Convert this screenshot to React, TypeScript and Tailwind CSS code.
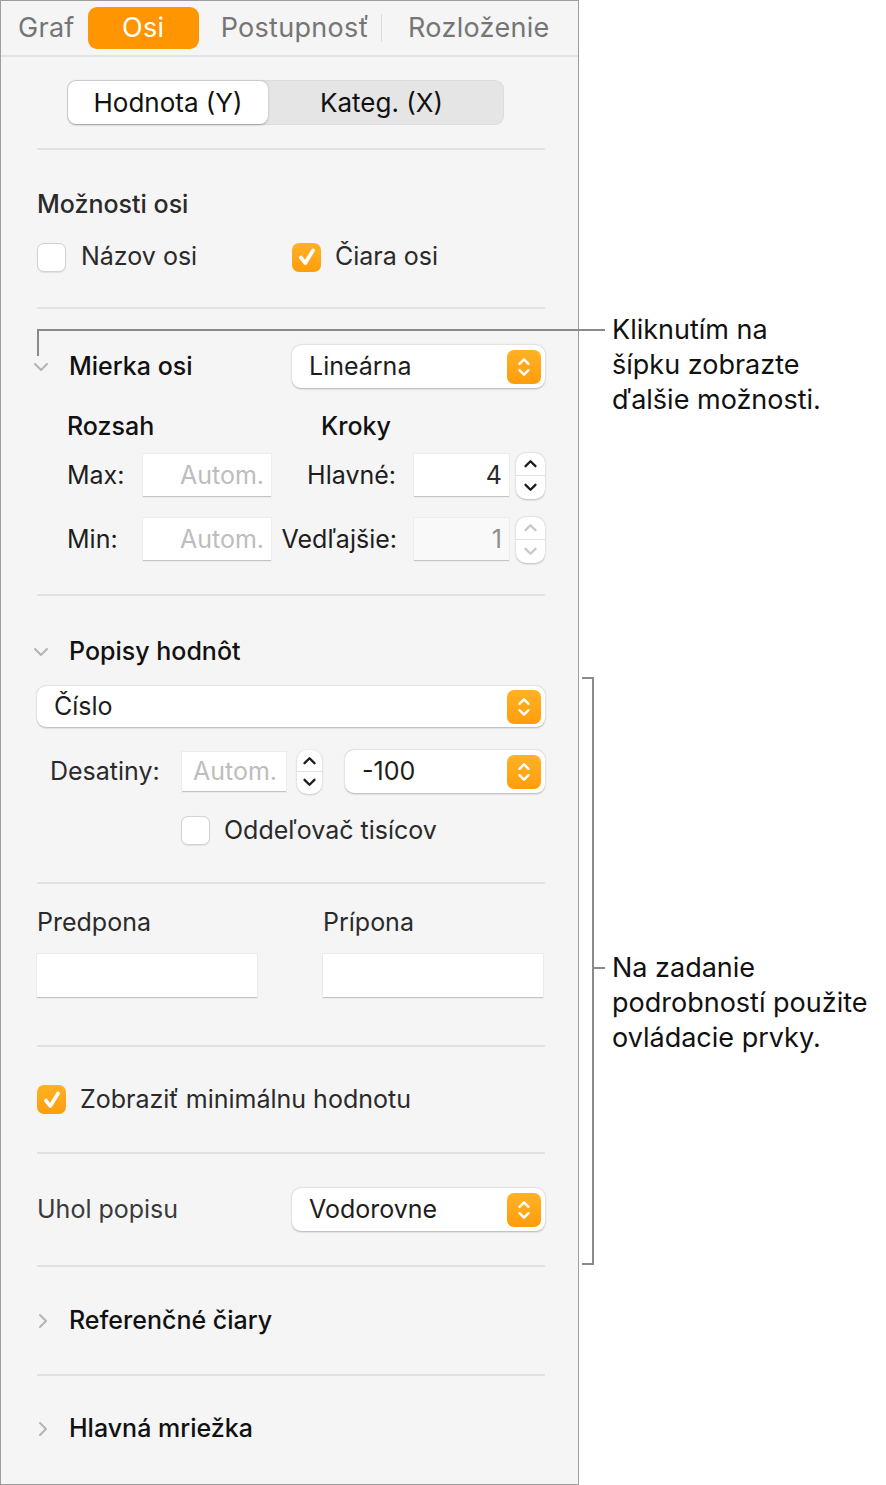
import React from 'react'

const FONT = { fontFamily: 'Inter, "Noto Sans", "Liberation Sans", sans-serif' }

function UpDown({ className = '' }: { className?: string }) {
  return (
    <svg viewBox="0 0 20 28" className={className} fill="none" stroke="currentColor" strokeWidth="2.6" strokeLinecap="round" strokeLinejoin="round">
      <path d="M5 10.5 L10 5.5 L15 10.5" />
      <path d="M5 17.5 L10 22.5 L15 17.5" />
    </svg>
  )
}

function Popup({ label, className = '' }: { label: string; className?: string }) {
  return (
    <div className={`flex items-center justify-between bg-white rounded-[9px] shadow-[0_0.5px_2px_rgba(0,0,0,0.28)] pl-[17px] pr-[4px] ${className}`}>
      <span className="text-[25px] text-[#1d1d1d] leading-none">{label}</span>
      <div className="w-[34px] h-[34px] rounded-[7px] bg-gradient-to-b from-[#ffb224] to-[#ff9d0a] flex items-center justify-center text-white">
        <UpDown className="w-[18px] h-[26px]" />
      </div>
    </div>
  )
}

function Stepper({ disabled = false, className = '' }: { disabled?: boolean; className?: string }) {
  const c = disabled ? 'text-[#c8c8c8]' : 'text-[#1d1d1d]'
  return (
    <div className={`flex flex-col bg-white rounded-[10px] shadow-[0_0.5px_2px_rgba(0,0,0,0.25)] ${c} ${className}`}>
      <div className="flex-1 flex items-center justify-center border-b border-[#e2e2e2]">
        <svg viewBox="0 0 16 10" className="w-[15px] h-[9px]" fill="none" stroke="currentColor" strokeWidth="2.6" strokeLinecap="round" strokeLinejoin="round">
          <path d="M2.5 8 L8 2.5 L13.5 8" />
        </svg>
      </div>
      <div className="flex-1 flex items-center justify-center">
        <svg viewBox="0 0 16 10" className="w-[15px] h-[9px]" fill="none" stroke="currentColor" strokeWidth="2.6" strokeLinecap="round" strokeLinejoin="round">
          <path d="M2.5 2 L8 7.5 L13.5 2" />
        </svg>
      </div>
    </div>
  )
}

function Checkbox({ checked = false }: { checked?: boolean }) {
  if (checked) {
    return (
      <div className="w-[29px] h-[29px] rounded-[7px] bg-gradient-to-b from-[#ffb224] to-[#ff9d0a] flex items-center justify-center shrink-0">
        <svg viewBox="0 0 20 20" className="w-[22px] h-[22px]" fill="none" stroke="white" strokeWidth="3.4" strokeLinecap="round" strokeLinejoin="round">
          <path d="M4.5 10.5 L8.5 15.5 L15.5 4" />
        </svg>
      </div>
    )
  }
  return <div className="w-[29px] h-[29px] rounded-[7px] bg-white border border-[#d2d2d2] shadow-[0_0.5px_1px_rgba(0,0,0,0.08)] shrink-0" />
}

function Field({ value, placeholder, disabled = false, className = '' }: { value?: string; placeholder?: string; disabled?: boolean; className?: string }) {
  return (
    <div className={`flex items-center justify-end pr-[7px] ${disabled ? 'bg-[#f9f9f9]' : 'bg-white'} border-b border-[#c4c4c4] shadow-[0_0_0_1px_rgba(0,0,0,0.03)] ${className}`}>
      {value ? (
        <span className={`text-[25px] leading-none ${disabled ? 'text-[#8e8e8e]' : 'text-[#2a2a2a]'}`}>{value}</span>
      ) : (
        <span className="text-[25px] leading-none text-[#bdbdbd]">{placeholder}</span>
      )}
    </div>
  )
}

function Disclosure({ open = false }: { open?: boolean }) {
  return open ? (
    <svg viewBox="0 0 16 10" className="w-[16px] h-[10px] text-[#b4b4b4]" fill="none" stroke="currentColor" strokeWidth="2" strokeLinecap="round" strokeLinejoin="round">
      <path d="M2 2 L8 8 L14 2" />
    </svg>
  ) : (
    <svg viewBox="0 0 10 16" className="w-[10px] h-[16px] text-[#b4b4b4]" fill="none" stroke="currentColor" strokeWidth="2" strokeLinecap="round" strokeLinejoin="round">
      <path d="M2 2 L8 8 L2 14" />
    </svg>
  )
}

function Divider() {
  return <div className="h-[2px] bg-[#e1e1e1]" />
}

export default function App() {
  return (
    <div className="relative w-[886px] h-[1485px] bg-white flex text-[#1d1d1d]" style={FONT}>
      {/* inspector panel */}
      <div className="w-[579px] h-[1485px] bg-[#f5f5f5] border border-[#9d9d9d] flex flex-col shrink-0">
        {/* tabs */}
        <div className="h-[56px] border-b-2 border-[#e3e3e3] flex items-center pl-[17px] text-[27px] tracking-[0.3px] text-[#757575]">
          <span>Graf</span>
          <div className="ml-[13px] w-[111px] h-[42px] rounded-[9px] bg-[#ff9500] text-white flex items-center justify-center">Osi</div>
          <span className="ml-[22px]">Postupnosť</span>
          <div className="ml-[12px] w-px h-[28px] bg-[#dadada]" />
          <span className="ml-[26px]">Rozloženie</span>
        </div>

        <div className="pl-[36px] pr-[33px] flex flex-col">
          {/* segmented */}
          <div className="h-[91px] flex items-center">
            <div className="ml-[30px] w-[437px] h-[45px] rounded-[9px] bg-[#e5e5e5] flex p-[1px] shadow-[inset_0_0_0_1px_rgba(0,0,0,0.04)]">
              <div className="w-[200px] rounded-[8px] bg-white shadow-[0_0.5px_2px_rgba(0,0,0,0.3)] flex items-center justify-center text-[26px] text-[#111]">Hodnota (Y)</div>
              <div className="flex-1 flex items-center justify-center text-[26px] text-[#111] pr-[8px]">Kateg. (X)</div>
            </div>
          </div>
          <Divider />

          {/* moznosti osi */}
          <div className="h-[157px] flex flex-col">
            <div className="mt-[30px] h-[50px] flex items-center text-[25px] font-medium text-[#2a2a2a]">Možnosti osi</div>
            <div className="h-[54px] flex items-center">
              <div className="w-[255px] flex items-center gap-[15px]">
                <Checkbox />
                <span className="text-[25px] text-[#2a2a2a]">Názov osi</span>
              </div>
              <div className="flex items-center gap-[14px]">
                <Checkbox checked />
                <span className="text-[25px] text-[#2a2a2a]">Čiara osi</span>
              </div>
            </div>
          </div>
          <Divider />

          {/* mierka osi */}
          <div className="h-[285px] flex flex-col">
            <div className="mt-[36px] h-[43px] flex items-center">
              <div className="w-[36px] -ml-[4px]">
                <Disclosure open />
              </div>
              <span className="text-[25px] font-medium text-[#111]">Mierka osi</span>
              <Popup label="Lineárna" className="ml-auto w-[253px] h-[43px]" />
            </div>
            <div className="mt-[24px] h-[30px] flex items-center text-[25px] font-medium text-[#111]">
              <span className="ml-[30px] w-[254px]">Rozsah</span>
              <span>Kroky</span>
            </div>
            <div className="mt-[12px] h-[43px] flex items-center">
              <span className="ml-[30px] w-[76px] text-[25px]">Max:</span>
              <Field placeholder="Autom." className="w-[128px] h-[43px]" />
              <span className="w-[129px] text-right text-[25px] pr-[4px]">Hlavné:</span>
              <Field value="4" className="ml-[14px] w-[95px] h-[43px]" />
              <Stepper className="ml-[7px] w-[29px] h-[46px]" />
            </div>
            <div className="mt-[21px] h-[43px] flex items-center">
              <span className="ml-[30px] w-[76px] text-[25px]">Min:</span>
              <Field placeholder="Autom." className="w-[128px] h-[43px]" />
              <span className="w-[129px] text-right text-[25px] pr-[3px] whitespace-nowrap">Vedľajšie:</span>
              <Field value="1" disabled className="ml-[14px] w-[95px] h-[43px]" />
              <Stepper disabled className="ml-[7px] w-[29px] h-[46px]" />
            </div>
          </div>
          <Divider />

          {/* popisy hodnot */}
          <div className="h-[286px] flex flex-col">
            <div className="mt-[41px] h-[30px] flex items-center">
              <div className="w-[36px] -ml-[4px]">
                <Disclosure open />
              </div>
              <span className="text-[25px] font-medium text-[#111]">Popisy hodnôt</span>
            </div>
            <Popup label="Číslo" className="mt-[19px] h-[41px] w-full" />
            <div className="mt-[23px] h-[43px] flex items-center">
              <span className="ml-[13px] w-[132px] text-[25px] text-[#2a2a2a]">Desatiny:</span>
              <Field placeholder="Autom." className="w-[104px] h-[40px] !justify-start pl-[11px]" />
              <Stepper className="ml-[11px] w-[25px] h-[44px]" />
              <Popup label="-100" className="ml-auto w-[200px] h-[43px]" />
            </div>
            <div className="mt-[23px] h-[29px] flex items-center gap-[14px] pl-[144px]">
              <Checkbox />
              <span className="text-[25px] text-[#2a2a2a]">Oddeľovač tisícov</span>
            </div>
          </div>
          <Divider />

          {/* predpona / pripona */}
          <div className="h-[161px] flex flex-col">
            <div className="mt-[25px] h-[28px] flex items-center text-[25px] text-[#2a2a2a]">
              <span className="w-[286px]">Predpona</span>
              <span>Prípona</span>
            </div>
            <div className="mt-[17px] flex">
              <div className="w-[220px] h-[44px] bg-white border-b border-[#c4c4c4] shadow-[0_0_0_1px_rgba(0,0,0,0.04)]" />
              <div className="ml-[66px] w-[220px] h-[44px] bg-white border-b border-[#c4c4c4] shadow-[0_0_0_1px_rgba(0,0,0,0.04)]" />
            </div>
          </div>
          <Divider />

          {/* zobrazit minimalnu */}
          <div className="h-[105px] flex items-center gap-[14px]">
            <Checkbox checked />
            <span className="text-[25px] text-[#2a2a2a]">Zobraziť minimálnu hodnotu</span>
          </div>
          <Divider />

          {/* uhol popisu */}
          <div className="h-[111px] flex items-center">
            <span className="text-[25px] text-[#3a3a3a]">Uhol popisu</span>
            <Popup label="Vodorovne" className="ml-auto w-[253px] h-[43px]" />
          </div>
          <Divider />

          <div className="h-[107px] flex items-center">
            <div className="w-[32px] pl-[1px]">
              <Disclosure />
            </div>
            <span className="text-[25px] font-medium text-[#111]">Referenčné čiary</span>
          </div>
          <Divider />

          <div className="h-[106px] flex items-center">
            <div className="w-[32px] pl-[1px]">
              <Disclosure />
            </div>
            <span className="text-[25px] font-medium text-[#111]">Hlavná mriežka</span>
          </div>
        </div>
      </div>

      {/* callout 1 */}
      <div className="absolute left-[37px] top-[329px] w-[568px] h-[2px] bg-[#8a8a8a]" />
      <div className="absolute left-[37px] top-[329px] w-[2px] h-[27px] bg-[#8a8a8a]" />
      <div className="absolute left-[612px] top-[312px] text-[27px] leading-[35px] text-[#111]">
        Kliknutím na<br />šípku zobrazte<br />ďalšie možnosti.
      </div>

      {/* callout 2 */}
      <div className="absolute left-[582px] top-[677px] w-[12px] h-[588px] border-t-2 border-b-2 border-r-2 border-[#8a8a8a]" />
      <div className="absolute left-[594px] top-[967px] w-[11px] h-[2px] bg-[#8a8a8a]" />
      <div className="absolute left-[612px] top-[950px] text-[27px] leading-[35px] text-[#111] whitespace-nowrap">
        Na zadanie<br />podrobností použite<br />ovládacie prvky.
      </div>
    </div>
  )
}
